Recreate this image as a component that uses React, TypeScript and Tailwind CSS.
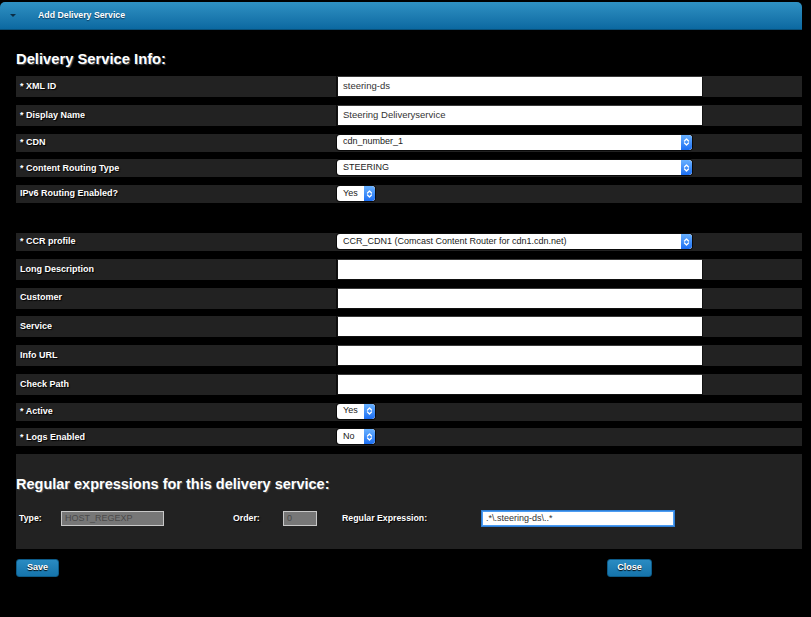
import React from 'react';

const font = "font-['Liberation_Sans',Arial,sans-serif]";

const Label: React.FC<{ text: string }> = ({ text }) => (
  <div className="w-[320px] shrink-0 pl-[4px] text-[9px] font-bold text-white [text-shadow:1px_1px_1px_#000]">
    {text}
  </div>
);

const TextInput: React.FC<{ value?: string }> = ({ value = '' }) => (
  <div className="w-[366px] h-full bg-white border border-[#111] border-t-[#3a3a3a] flex items-center pl-[5px] text-[9.5px] text-[#333]">
    {value}
  </div>
);

const Select: React.FC<{ value: string; width: string }> = ({ value, width }) => (
  <div className={`${width} h-[15px] mt-[1px] flex rounded-[3px] bg-white shadow-[0_0_0_1px_#0a0a0a] overflow-hidden`}>
    <div className="flex-1 flex items-center pl-[6px] text-[9px] text-[#222]">{value}</div>
    <div className="w-[11px] h-full flex items-center justify-center rounded-r-[3px] bg-gradient-to-b from-[#69b1ff] to-[#1b6ef3]">
      <svg width="7" height="10" viewBox="0 0 7 10" fill="none" stroke="white" strokeWidth="1.3" strokeLinecap="round" strokeLinejoin="round">
        <path d="M1.5 4L3.5 2L5.5 4" />
        <path d="M1.5 6L3.5 8L5.5 6" />
      </svg>
    </div>
  </div>
);

const InputRow: React.FC<{ label: string; value?: string }> = ({ label, value }) => (
  <div className="h-[21px] flex items-center bg-[#222]">
    <Label text={label} />
    <div className="h-full flex-1 flex">
      <div className="w-[1px] h-full bg-[#0d0d0d]" />
      <TextInput value={value} />
    </div>
  </div>
);

const SelectRow: React.FC<{ label: string; value: string; width: string }> = ({ label, value, width }) => (
  <div className="h-[18px] flex items-start bg-[#222]">
    <div className="h-full flex items-center">
      <Label text={label} />
    </div>
    <div className="pl-[1px]">
      <Select value={value} width={width} />
    </div>
  </div>
);

const BlueButton: React.FC<{ text: string; width: string }> = ({ text, width }) => (
  <button className={`${width} h-[18px] rounded-[3px] bg-gradient-to-b from-[#2a8bc2] to-[#1574ab] border border-[#0d5b88] text-[9px] font-bold text-white [text-shadow:0_1px_1px_#000]`}>
    {text}
  </button>
);

const App: React.FC = () => {
  return (
    <div className={`w-[811px] h-[617px] bg-black overflow-hidden ${font}`}>
      {/* title bar */}
      <div className="pt-[2px] pr-[9px]">
        <div className="h-[28px] flex items-center rounded-t-[5px] bg-gradient-to-b from-[#2f91c3] to-[#0b69a1] border-b border-[#0a4f78]">
          <span className="ml-[10px] w-0 h-0 border-l-[3px] border-r-[3px] border-t-[3px] border-l-transparent border-r-transparent border-t-[#0b2e47]" />
          <span className="ml-[22px] text-[8.75px] font-bold text-white [text-shadow:0_1px_1px_#0a3a5c]">Add Delivery Service</span>
        </div>
      </div>

      <div className="pl-[16px] pr-[9px]">
        <h2 className="mt-[21px] h-[17px] leading-[17px] text-[14.75px] font-bold text-white [text-shadow:1px_1px_1px_#555]">
          Delivery Service Info:
        </h2>

        <div className="mt-[8px] flex flex-col gap-[7.75px]">
          <InputRow label="* XML ID" value="steering-ds" />
          <InputRow label="* Display Name" value="Steering Deliveryservice" />
          <SelectRow label="* CDN" value="cdn_number_1" width="w-[355px]" />
          <SelectRow label="* Content Routing Type" value="STEERING" width="w-[355px]" />
          <SelectRow label="IPv6 Routing Enabled?" value="Yes" width="w-[38px]" />
          <div className="h-[14.5px]" />
          <SelectRow label="* CCR profile" value="CCR_CDN1 (Comcast Content Router for cdn1.cdn.net)" width="w-[355px]" />
          <InputRow label="Long Description" />
          <InputRow label="Customer" />
          <InputRow label="Service" />
          <InputRow label="Info URL" />
          <InputRow label="Check Path" />
          <SelectRow label="* Active" value="Yes" width="w-[38px]" />
          <SelectRow label="* Logs Enabled" value="No" width="w-[38px]" />

          {/* regex section */}
          <div className="h-[95px] bg-[#222] flex flex-col">
            <h2 className="mt-[22px] h-[17px] leading-[17px] text-[14.5px] font-bold text-white [text-shadow:1px_1px_1px_#555]">
              Regular expressions for this delivery service:
            </h2>
            <div className="mt-[18px] flex items-center text-[8.75px] font-bold text-white [text-shadow:1px_1px_1px_#000]">
              <span className="ml-[3px] w-[42px]">Type:</span>
              <div className="w-[103px] h-[15px] bg-[#777] border border-[#c8c8c8] flex items-center pl-[3px] text-[9px] font-normal text-[#4a4a4a] [text-shadow:none]">
                HOST_REGEXP
              </div>
              <span className="ml-[69px] w-[50px]">Order:</span>
              <div className="w-[34px] h-[15px] bg-[#777] border border-[#c8c8c8] flex items-center pl-[3px] text-[9px] font-normal text-[#4a4a4a] [text-shadow:none]">
                0
              </div>
              <span className="ml-[25px] w-[140px]">Regular Expression:</span>
              <div className="w-[192px] h-[15px] bg-white border border-[#4c9cf2] shadow-[0_0_0_1px_#2f7fd6] flex items-center pl-[3px] text-[9px] font-normal text-[#333] [text-shadow:none]">
                .*\.steering-ds\..*
              </div>
            </div>
          </div>
        </div>

        <div className="mt-[10px] flex items-start">
          <BlueButton text="Save" width="w-[43px]" />
          <div className="ml-[548px] flex">
            <BlueButton text="Close" width="w-[45px]" />
          </div>
        </div>
      </div>
    </div>
  );
};

export default App;
